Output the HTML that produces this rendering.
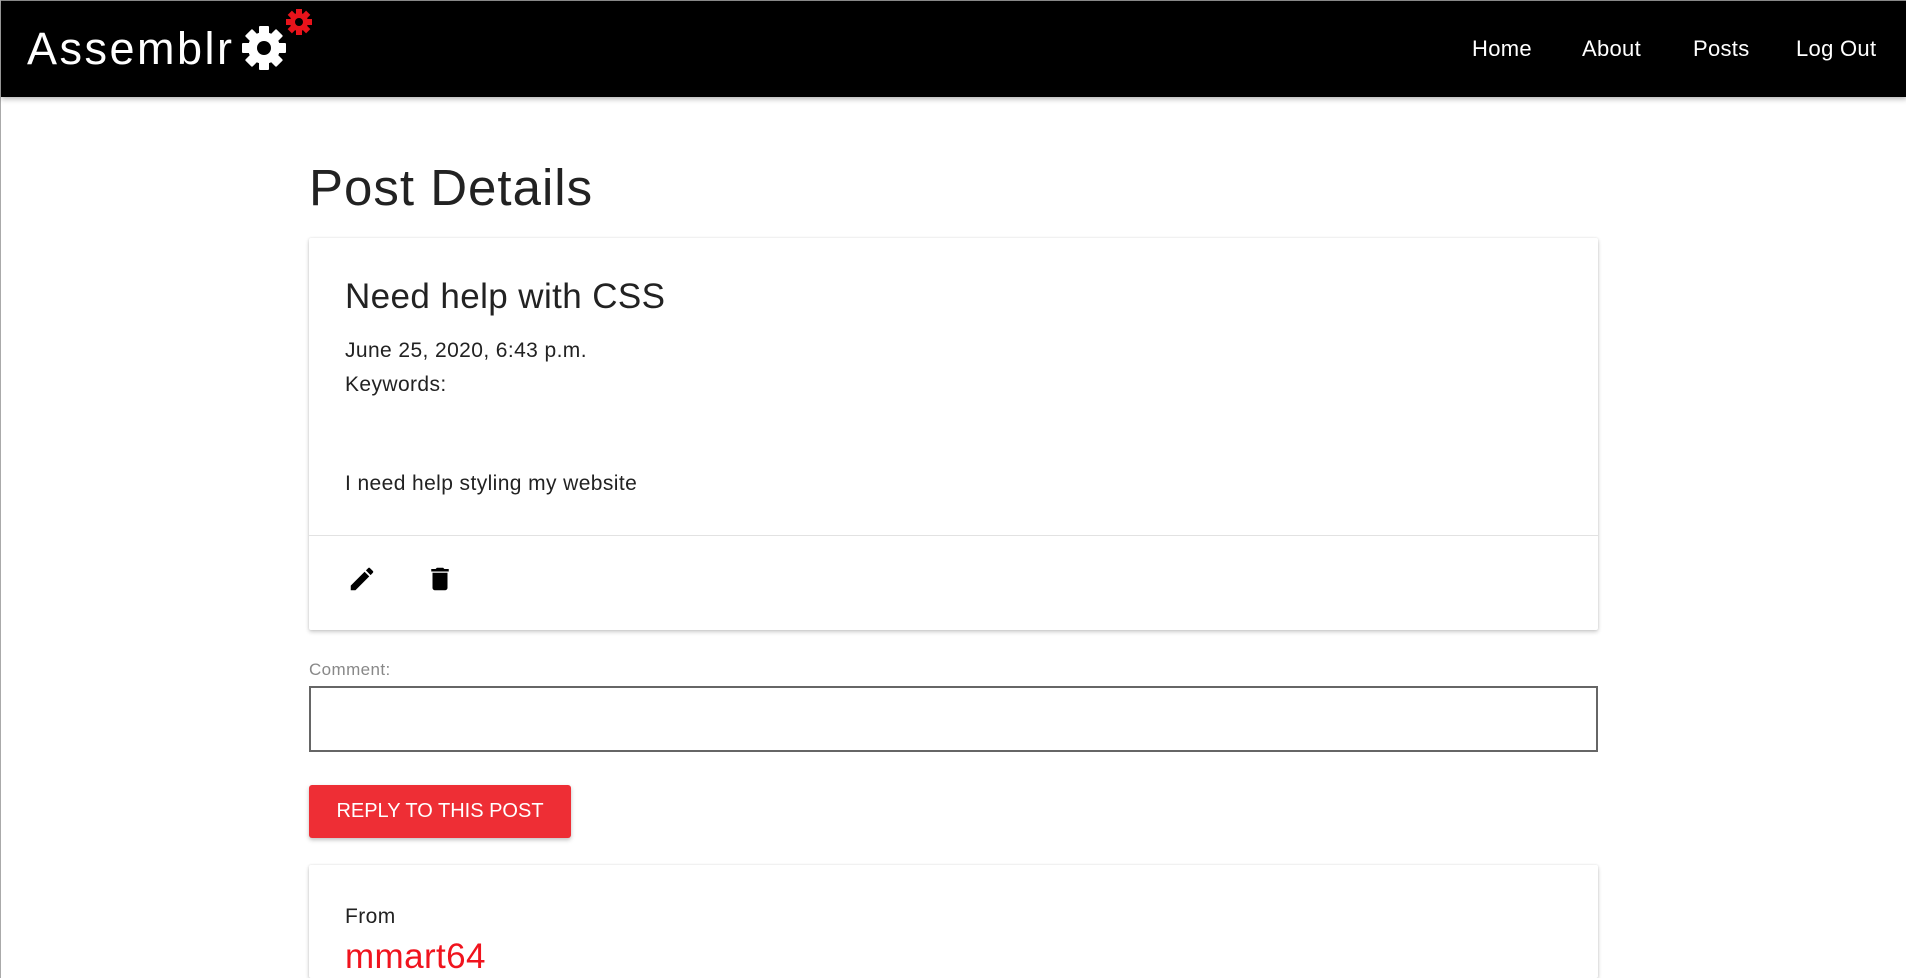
<!DOCTYPE html>
<html style="width:1906px;height:978px;overflow:hidden"><head><meta charset="utf-8"><style>
*{box-sizing:border-box;margin:0;padding:0}
body{width:1906px;height:978px;overflow:hidden;background:#fff;font-family:"Liberation Sans","DejaVu Sans",sans-serif;color:#222;position:relative;border-left:1px solid #aaa}
.nav{position:absolute;left:0;top:0;width:1906px;height:97px;background:#000;box-shadow:0 2px 5px rgba(0,0,0,.3);border-top:1px solid #888}
.logo{position:absolute;left:26px;top:22px;color:#fff;font-size:45px;letter-spacing:2.5px}
.nav a{position:absolute;top:35px;color:#fff;font-size:22px;text-decoration:none;letter-spacing:0.3px}
h1{position:absolute;left:308px;top:158px;font-size:51px;font-weight:normal;color:#222;letter-spacing:1px}
.card{position:absolute;left:308px;width:1289px;background:#fff;box-shadow:0 2px 4px rgba(0,0,0,.2),0 0 2px rgba(0,0,0,.1);border-radius:2px}
.t{position:absolute;font-size:21px;color:#222;letter-spacing:0.4px}
</style></head><body>
<div class="nav">
<div class="logo">Assemblr</div>
<svg style="position:absolute;left:238px;top:0px" width="80" height="80" viewBox="0 0 80 80">
<g transform="translate(25,47)" fill="#fff">
<circle r="16"/>
<g><rect x="-5" y="-22" width="10" height="9" rx="1"/><rect x="-5" y="13" width="10" height="9" rx="1"/><rect x="-22" y="-5" width="9" height="10" rx="1"/><rect x="13" y="-5" width="9" height="10" rx="1"/></g>
<g transform="rotate(45)"><rect x="-5" y="-22" width="10" height="9" rx="1"/><rect x="-5" y="13" width="10" height="9" rx="1"/><rect x="-22" y="-5" width="9" height="10" rx="1"/><rect x="13" y="-5" width="9" height="10" rx="1"/></g>
<circle r="7" fill="#000"/></g>
<g transform="translate(60,21)" fill="#e8131b">
<circle r="9"/>
<g><rect x="-3" y="-13" width="6" height="5"/><rect x="-3" y="8" width="6" height="5"/><rect x="-13" y="-3" width="5" height="6"/><rect x="8" y="-3" width="5" height="6"/></g>
<g transform="rotate(45)"><rect x="-3" y="-13" width="6" height="5"/><rect x="-3" y="8" width="6" height="5"/><rect x="-13" y="-3" width="5" height="6"/><rect x="8" y="-3" width="5" height="6"/></g>
<circle r="4" fill="#000"/></g>
</svg>
<a style="left:1471px">Home</a><a style="left:1581px">About</a><a style="left:1692px">Posts</a><a style="left:1795px">Log Out</a>
</div>
<h1>Post Details</h1>
<div class="card" style="top:238px;height:392px">
<div class="t" style="left:36px;top:39px;font-size:35px">Need help with CSS</div>
<div class="t" style="left:36px;top:101px">June 25, 2020, 6:43 p.m.</div>
<div class="t" style="left:36px;top:135px">Keywords:</div>
<div class="t" style="left:36px;top:234px">I need help styling my website</div>
<div style="position:absolute;left:0;right:0;top:297px;border-top:1px solid #e2e2e2"></div>
<svg style="position:absolute;left:38px;top:326px" width="30" height="30" viewBox="0 0 24 24"><path d="M3 17.25V21h3.75L17.81 9.94l-3.75-3.75L3 17.25zM20.71 7.04a1 1 0 000-1.41l-2.34-2.34a1 1 0 00-1.41 0l-1.83 1.83 3.75 3.75 1.83-1.83z"/></svg>
<svg style="position:absolute;left:116px;top:326px" width="30" height="30" viewBox="0 0 24 24"><path d="M6 19c0 1.1.9 2 2 2h8c1.1 0 2-.9 2-2V7H6v12zM19 4h-3.5l-1-1h-5l-1 1H5v2h14V4z"/></svg>
</div>
<div class="t" style="left:308px;top:660px;font-size:17px;color:#888">Comment:</div>
<div style="position:absolute;left:308px;top:686px;width:1289px;height:66px;border:2px solid #666;background:#fff"></div>
<div style="position:absolute;left:308px;top:785px;width:262px;height:53px;background:#ee2e35;border-radius:3px;box-shadow:0 2px 4px rgba(0,0,0,.25);color:#fff;font-size:20px;text-align:center;line-height:53px">REPLY TO THIS POST</div>
<div class="card" style="top:865px;height:113px">
<div class="t" style="left:36px;top:40px">From</div>
<div class="t" style="left:36px;top:72px;font-size:35px;color:#f0141e">mmart64</div>
</div>
</body></html>
